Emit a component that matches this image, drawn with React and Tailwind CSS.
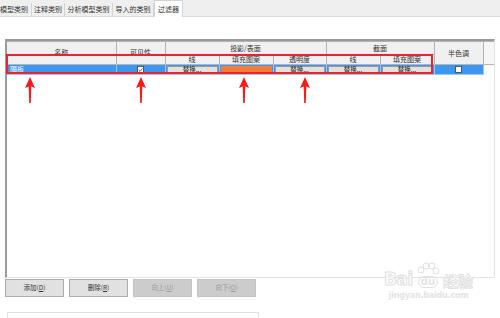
import React from 'react';

const tabs = [
  { label: '模型类别', w: 'w-[35px]' },
  { label: '注释类别', w: 'w-[33px]' },
  { label: '分析模型类别', w: 'w-[48px]' },
  { label: '导入的类别', w: 'w-[41px]' },
];

const Arrow = ({ left }) => (
  <svg className="absolute top-[77px]" style={{ left }} width="10" height="26" viewBox="0 0 10 26">
    <path d="M5 0 L10 11 L6.3 9.5 L5.8 26 L4.2 26 L3.7 9.5 L0 11 Z" fill="#ff1a1a" />
  </svg>
);

const SwapBtn = () => (
  <div className="mx-[1px] h-[8px] bg-[#e1e1e1] border border-[#9a9a9a] flex items-center justify-center text-[6.5px] leading-none text-[#222]">
    替换...
  </div>
);

export default function App() {
  const th = 'border border-[#b4b4b4] bg-[#f0f0f0] font-normal text-[7px] leading-none text-[#333] p-0';
  const td = 'border border-[#9cc7f2] p-0';
  return (
    <div
      className="relative w-[500px] h-[318px] overflow-hidden bg-white"
      style={{ fontFamily: '"Noto Sans CJK SC", "Noto Sans", sans-serif' }}
    >
      {/* tabs */}
      <div className="flex h-[17px] bg-[#efefef] border-b border-[#d9d9d9]">
        <div className="flex -ml-[3px]">
          {tabs.map((t) => (
            <div
              key={t.label}
              className={`${t.w} mt-[3px] h-[13px] border-r border-[#d4d4d4] flex items-center justify-center text-[7px] text-[#333] whitespace-nowrap`}
            >
              {t.label}
            </div>
          ))}
        </div>
        <div className="w-[29px] h-[17px] -mb-[1px] bg-white border-x border-t border-[#d4d4d4] flex items-center justify-center text-[7px] text-[#333]">
          过滤器
        </div>
      </div>

      {/* table frame */}
      <div className="ml-[5px] mt-[22px] w-[490px] h-[239px] border-t-2 border-l-2 border-t-[#9a9a9a] border-l-[#9a9a9a] border-r border-b border-r-[#e2e2e2] border-b-[#e2e2e2] overflow-hidden">
        <table className="table-fixed border-collapse w-[488px]">
          <colgroup>
            <col className="w-[109px]" />
            <col className="w-[49px]" />
            <col className="w-[54px]" />
            <col className="w-[54px]" />
            <col className="w-[53px]" />
            <col className="w-[54px]" />
            <col className="w-[54px]" />
            <col className="w-[49px]" />
            <col className="w-[12px]" />
          </colgroup>
          <thead>
            <tr className="h-[13px]">
              <th rowSpan={2} className={`${th} border-l-0 pb-[1px]`}>名称</th>
              <th rowSpan={2} className={`${th} pb-[1px]`}>可见性</th>
              <th colSpan={3} className={th}>投影/表面</th>
              <th colSpan={2} className={th}>截面</th>
              <th rowSpan={2} className={th}>半色调</th>
              <th rowSpan={2} className={`${th} bg-[#f7f7f7] border-r-0`}></th>
            </tr>
            <tr className="h-[10px]">
              <th className={th}>线</th>
              <th className={th}>填充图案</th>
              <th className={th}>透明度</th>
              <th className={th}>线</th>
              <th className={th}>填充图案</th>
            </tr>
          </thead>
          <tbody>
            <tr className="h-[10px] bg-[#3b97f0]">
              <td className={`${td} border-l-0 text-[7px] leading-none text-white pl-[3px]`}>隔板</td>
              <td className={td}>
                <div className="mx-auto w-[7px] h-[7px] bg-white border border-[#555] flex items-center justify-center">
                  <svg width="6" height="6" viewBox="0 0 6 6">
                    <path d="M0.8 3 L2.4 4.6 L5.3 1.2" stroke="#222" strokeWidth="0.9" fill="none" />
                  </svg>
                </div>
              </td>
              <td className={td}><SwapBtn /></td>
              <td className={td}><div className="mx-[1px] h-[8px] bg-[#f47c3c]" /></td>
              <td className={td}><SwapBtn /></td>
              <td className={td}><SwapBtn /></td>
              <td className={td}><SwapBtn /></td>
              <td className={td}>
                <div className="mx-auto w-[7px] h-[7px] bg-white border border-[#555]" />
              </td>
              <td className="p-0 bg-white"></td>
            </tr>
          </tbody>
        </table>
      </div>

      {/* buttons */}
      <div className="flex gap-[5px] ml-[5px] mt-[1px]">
        <button className="w-[59px] h-[18px] bg-[#e1e1e1] border border-[#adadad] text-[6.5px] text-[#333]">
          添加(<span className="underline">D</span>)
        </button>
        <button className="w-[59px] h-[18px] bg-[#e1e1e1] border border-[#adadad] text-[6.5px] text-[#333]">
          删除(<span className="underline">R</span>)
        </button>
        <button className="w-[59px] h-[18px] bg-[#cccccc] border border-[#c4c4c4] text-[6.5px] text-[#9a9a9a]">
          向上(<span className="underline">U</span>)
        </button>
        <button className="w-[59px] h-[18px] bg-[#cccccc] border border-[#c4c4c4] text-[6.5px] text-[#9a9a9a]">
          向下(<span className="underline">O</span>)
        </button>
      </div>

      <div className="ml-[7px] mt-[15px] w-[252px] h-[20px] border border-[#e2e2e2]" />

      {/* red annotation box */}
      <div className="absolute left-[6px] top-[54px] w-[427px] h-[20px] border-2 border-[#e8262a]" />

      <Arrow left="25px" />
      <Arrow left="136px" />
      <Arrow left="239px" />
      <Arrow left="300px" />

      {/* watermark */}
      <div className="absolute left-[384px] top-[262px] flex flex-col items-center text-[#e4e4e4] select-none">
        <div className="flex items-end leading-none">
          <span className="text-[17px] font-bold tracking-tight" style={{ fontFamily: '"DejaVu Sans", sans-serif', WebkitTextStroke: '1px #e0e0e0', color: 'white' }}>Bai</span>
          <div className="relative ml-[2px] flex flex-col items-center">
            <svg width="26" height="14" viewBox="0 0 26 14">
              <circle cx="6" cy="8" r="3" fill="none" stroke="#e0e0e0" />
              <circle cx="11" cy="4" r="3" fill="none" stroke="#e0e0e0" />
              <circle cx="17" cy="4" r="3" fill="none" stroke="#e0e0e0" />
              <circle cx="21" cy="9" r="3" fill="none" stroke="#e0e0e0" />
            </svg>
            <span className="text-[10px] font-bold border border-[#e0e0e0] rounded-full px-[2px]" style={{ fontFamily: '"DejaVu Sans", sans-serif' }}>du</span>
          </div>
          <span className="ml-[2px] text-[15px] font-bold" style={{ WebkitTextStroke: '0.8px #e0e0e0', color: 'white' }}>经验</span>
        </div>
        <span className="mt-[2px] text-[8px] font-bold tracking-tight" style={{ fontFamily: '"DejaVu Sans", sans-serif' }}>jingyan.baidu.com</span>
      </div>
    </div>
  );
}
